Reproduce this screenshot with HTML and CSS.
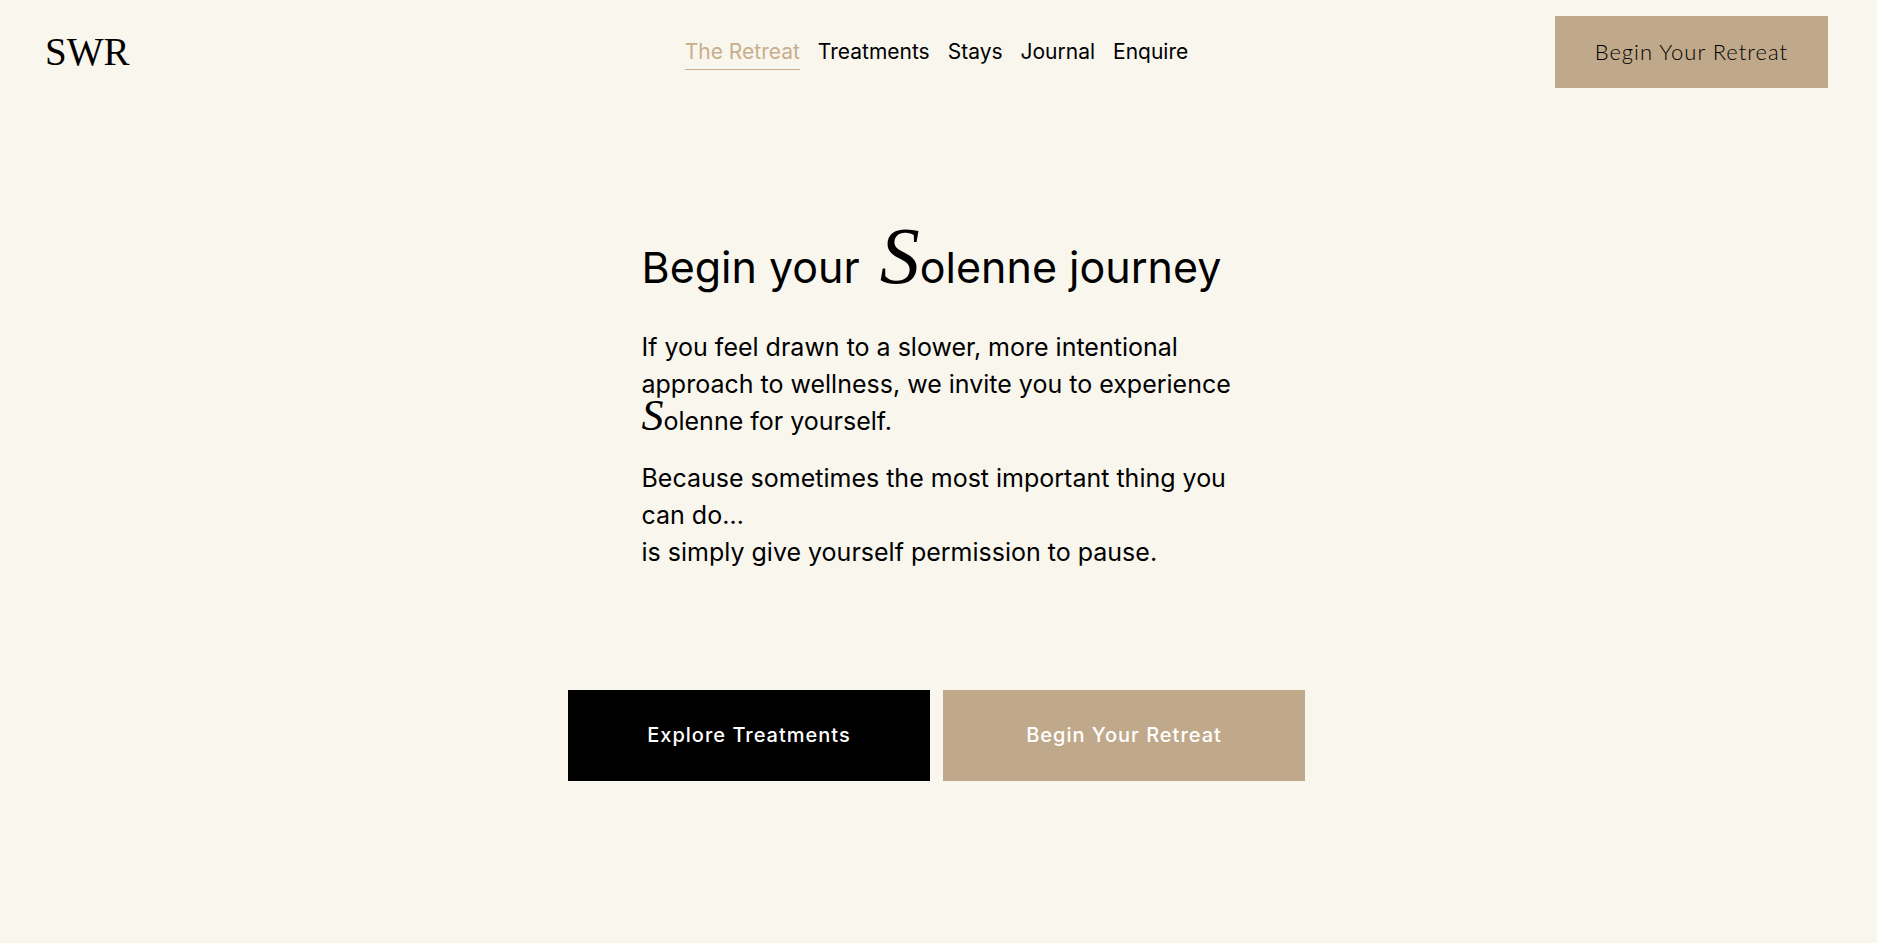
FILE: index.html
```html
<!DOCTYPE html>
<html lang="en">

<head>
  <meta charset="UTF-8" />
  <meta name="viewport" content="width=device-width, initial-scale=1" />
  <title>Solenne Wellness Retreat</title>
  <link rel="stylesheet" href="styles.css">
</head>

<body>
  <header class="site-header">
    <a class="logo" href="#">SWR</a>
    <nav class="main-nav">
      <a class="active" href="#retreat">The Retreat</a>
      <a href="#treatments">Treatments</a>
      <a href="#stays">Stays</a>
      <a href="#journal">Journal</a>
      <a href="#enquire">Enquire</a>
    </nav>
    <a class="header-cta" href="#begin">Begin Your Retreat</a>
  </header>

  <main class="journey">
    <section class="journey-text">
      <h1>Begin your <span class="swash">S</span>olenne journey</h1>
      <p>If you feel drawn to a slower, more intentional approach to wellness, we invite you to experience <span class="swash">S</span>olenne for yourself.</p>
      <p>Because sometimes the most important thing you can do…<br>is simply give yourself permission to pause.</p>
    </section>
    <div class="journey-actions">
      <a class="btn btn-dark" href="#treatments">Explore Treatments</a>
      <a class="btn btn-sand" href="#begin">Begin Your Retreat</a>
    </div>
  </main>
</body>

</html>
```
FILE: styles.css
```css
/* --- RESET AND BASE --- */
* {
  margin: 0;
  padding: 0;
  box-sizing: border-box;
}

body {
  background-color: #f9f6ee;
  color: #000;
  font-family: Inter, "Open Sans", sans-serif;
  min-height: 100vh;
}

a {
  color: inherit;
  text-decoration: none;
}

/* --- HEADER --- */
.site-header {
  display: grid;
  grid-template-columns: 1fr auto 1fr;
  align-items: center;
  padding: 16px 49px 16px 45px;
}

.logo {
  justify-self: start;
  font-family: "Liberation Serif", serif;
  font-size: 39px;
  line-height: 48px;
}

.main-nav {
  display: flex;
  gap: 18px;
  font-size: 21px;
  line-height: 34px;
}

.main-nav a {
  border-bottom: 1px solid transparent;
}

.main-nav .active {
  color: #c8ae8c;
  border-bottom-color: #c8ae8c;
}

.header-cta {
  justify-self: end;
  padding: 20px 40px;
  background-color: #bfa98a;
  font-family: Lato, sans-serif;
  font-size: 22px;
  font-weight: 300;
  line-height: 32px;
  letter-spacing: 1px;
}

/* --- JOURNEY --- */
.journey {
  display: flex;
  flex-direction: column;
  align-items: center;
  padding: 120px 24px 120px 20px;
}

.journey-text {
  max-width: 590px;
}

.journey-text h1 {
  margin-bottom: 19px;
  font-size: 43px;
  font-weight: 400;
  line-height: 86px;
}

.journey-text p {
  margin-bottom: 20px;
  font-size: 25px;
  line-height: 37px;
}

/* oversized italic initial of the name */
.swash {
  margin-left: 8px;
  font-family: "Liberation Serif", serif;
  font-style: italic;
  font-size: 80px;
  line-height: 0;
}

.journey-text p .swash {
  margin-left: 0;
  font-size: 44px;
}

.journey-actions {
  display: flex;
  gap: 13px;
  margin-top: 99px;
}

.btn {
  width: 362px;
  padding: 28px 20px;
  color: #fff;
  font-size: 20px;
  font-weight: 500;
  line-height: 35px;
  letter-spacing: 1px;
  text-align: center;
}

.btn-dark {
  background-color: #000;
}

.btn-sand {
  background-color: #bfa98a;
}
```
